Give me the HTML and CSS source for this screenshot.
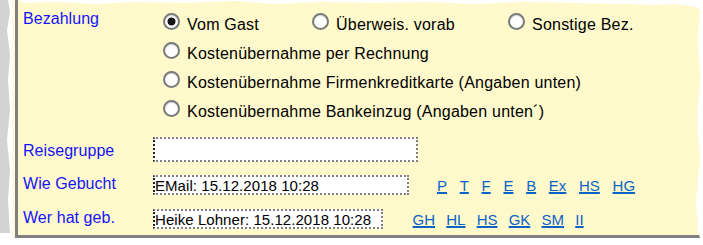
FILE: index.html
```html
<!DOCTYPE html>
<html lang="de">
<head>
  <meta charset="UTF-8" />
  <meta name="viewport" content="width=device-width, initial-scale=1.0"/>
  <title>Buchung</title>
  <link rel="stylesheet" href="styles.css">
</head>
<body>

  <div class="page">
    <div class="shadow"></div>
    <div class="rim"></div>

    <form class="panel">
      <div class="row">
        <span class="label">Bezahlung</span>
        <div class="options">
          <label class="option"><input type="radio" name="payment" checked>Vom Gast</label>
          <label class="option"><input type="radio" name="payment">Überweis. vorab</label>
          <label class="option"><input type="radio" name="payment">Sonstige Bez.</label>
          <label class="option wide"><input type="radio" name="payment">Kostenübernahme per Rechnung</label>
          <label class="option wide"><input type="radio" name="payment">Kostenübernahme Firmenkreditkarte (Angaben unten)</label>
          <label class="option wide"><input type="radio" name="payment">Kostenübernahme Bankeinzug (Angaben unten´)</label>
        </div>
      </div>

      <div class="row row-group">
        <label class="label" for="group">Reisegruppe</label>
        <input type="text" id="group" class="field field-group">
      </div>

      <div class="row row-booked">
        <label class="label" for="bookedVia">Wie Gebucht</label>
        <input type="text" id="bookedVia" class="field field-booked" value="EMail: 15.12.2018 10:28" readonly>
        <div class="links links-booked">
          <a href="#">P</a>
          <a href="#">T</a>
          <a href="#">F</a>
          <a href="#">E</a>
          <a href="#">B</a>
          <a href="#">Ex</a>
          <a href="#">HS</a>
          <a href="#">HG</a>
        </div>
      </div>

      <div class="row row-by">
        <label class="label" for="bookedBy">Wer hat geb.</label>
        <input type="text" id="bookedBy" class="field field-by" value="Heike Lohner: 15.12.2018 10:28" readonly>
        <div class="links links-by">
          <a href="#">GH</a>
          <a href="#">HL</a>
          <a href="#">HS</a>
          <a href="#">GK</a>
          <a href="#">SM</a>
          <a href="#">II</a>
        </div>
      </div>
    </form>
  </div>

</body>
</html>
```

FILE: styles.css
```css
body {
  margin: 0;
  background: white;
  font-family: "Liberation Sans", Arial, sans-serif;
}

.page {
  display: flex;
  align-items: flex-start;
  width: 703px;
  height: 245px;
}

.shadow {
  width: 10px;
  height: 233px;
  margin-right: 2px;
  background: #d3d3d3;
  clip-path: polygon(0 0, 8px 0, 10px 12px, 7px 30px, 10px 55px, 8px 80px, 10px 110px, 7px 140px, 10px 170px, 8px 200px, 10px 233px, 0 233px);
}

.rim {
  width: 3px;
  height: 238px;
  background: #fdf9e2;
}

.panel {
  box-sizing: border-box;
  width: 685px;
  height: 238px;
  margin: 0;
  padding: 10px 0 6px 5px;
  background: #fff9cc;
  border-left: 3px solid #7f7f7f;
  border-bottom: 3px solid #808080;
  clip-path: polygon(0 0, 4px 0, 10px 3px, 40px 2px, 80px 4px, 120px 2px, 170px 3px, 220px 1px, 260px 4px, 310px 2px, 360px 3px, 410px 2px, 460px 4px, 510px 2px, 560px 3px, 610px 4px, 640px 5px, 660px 4px, 680px 7px, 685px 10px, 683px 40px, 685px 80px, 682px 120px, 685px 160px, 681px 200px, 683px 230px, 685px 238px, 0 238px);
}

.row {
  display: flex;
  align-items: flex-start;
}

.label {
  flex: none;
  width: 130px;
  color: #1414ff;
  font-size: 16px;
  letter-spacing: 0.05px;
}

.options {
  margin-left: 10px;
  display: grid;
  grid-template-columns: 149px 196px auto;
  grid-auto-rows: 29px;
}

.option {
  display: flex;
  align-items: center;
  font-size: 16px;
  letter-spacing: 0.22px;
  color: black;
  white-space: nowrap;
}

.wide {
  grid-column: 1 / -1;
}

.option input {
  appearance: none;
  box-sizing: border-box;
  width: 17px;
  height: 17px;
  margin: 0 7px 7px 0;
  border: 2px solid #7a7a7a;
  border-radius: 50%;
  background: white;
  box-shadow: inset 0 1px 1px rgba(0,0,0,0.15);
}

.option input:checked {
  background: radial-gradient(circle, #161616 3.6px, white 4.4px);
}

.row-group {
  margin-top: 11px;
}

.row-group .label {
  padding-top: 5px;
}

.row-booked {
  margin-top: 13px;
}

.row-by {
  margin-top: 14px;
}

.field {
  box-sizing: border-box;
  height: 20px;
  margin: 0;
  padding: 0;
  border: 2px dotted #808080;
  border-left-color: #222;
  background: white;
  font-family: "Liberation Sans", Arial, sans-serif;
  font-size: 15px;
  letter-spacing: 0.06px;
  color: black;
  outline: none;
}

.field-group {
  width: 265px;
  height: 25px;
}

.field-booked {
  width: 256px;
}

.field-by {
  width: 230px;
}

.links {
  display: flex;
  align-self: center;
  font-size: 15px;
}

.links-booked {
  gap: 12.7px;
  margin-left: 28px;
}

.links-by {
  gap: 11.2px;
  margin-left: 29.6px;
}

.links a {
  color: #0a64c8;
  text-decoration: underline;
  text-decoration-thickness: 2px;
  text-underline-offset: 1px;
}
```
